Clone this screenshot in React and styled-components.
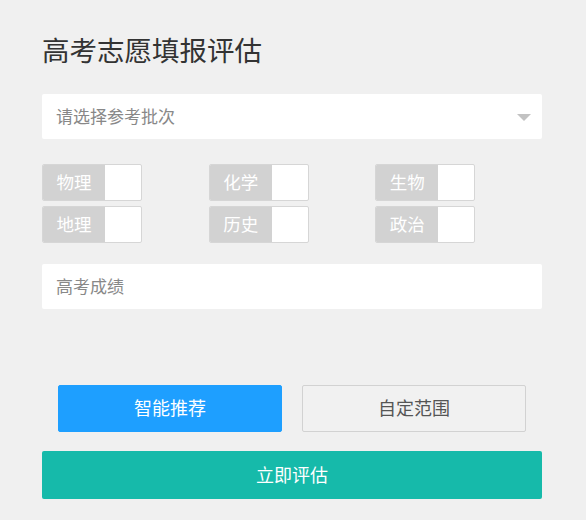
import React from "react";
import styled, { createGlobalStyle } from "styled-components";

const Global = createGlobalStyle`
  html, body { margin: 0; padding: 0; background: #f0f0f0; }
  body { font-family: "Noto Sans CJK SC", "Noto Sans", sans-serif; }
  * { box-sizing: border-box; }
`;

const Page = styled.div`
  width: 500px;
  margin-left: 42px;
  padding-top: 30px;
  display: flex;
  flex-direction: column;
`;

const Title = styled.h1`
  margin: 0;
  font-size: 27.5px;
  line-height: 38px;
  padding-bottom: 2px;
  font-weight: 400;
  color: #333;
`;

const Field = styled.div`
  height: 45px;
  margin-top: ${(p) => p.$mt}px;
  background: #fff;
  border-radius: 2px;
  display: flex;
  align-items: center;
  justify-content: space-between;
  padding: 0 11px 3px 14px;
  font-size: 17px;
  color: #888;
`;

const Arrow = styled.span`
  width: 0;
  height: 0;
  border-left: 7px solid transparent;
  border-right: 7px solid transparent;
  border-top: 7px solid #c2c2c2;
  margin-top: 4px;
`;

const Grid = styled.div`
  margin-top: 25px;
  display: grid;
  grid-template-columns: repeat(3, 1fr);
  row-gap: 5px;
`;

const Toggle = styled.div`
  width: 100px;
  height: 37px;
  display: flex;
  border: 1px solid #d6d6d6;
  border-radius: 2px;
  overflow: hidden;
  background: #fff;
`;

const ToggleLabel = styled.span`
  width: 62px;
  background: #d2d2d2;
  color: #fff;
  font-size: 17.5px;
  padding-bottom: 2px;
  display: flex;
  align-items: center;
  justify-content: center;
`;

const Buttons = styled.div`
  margin-top: 76px;
  display: flex;
  justify-content: space-between;
  padding: 0 16px;
`;

const Btn = styled.button`
  width: 224px;
  height: 47px;
  border-radius: 2px;
  font-family: inherit;
  font-size: 18px;
  padding: 0 0 3px;
  cursor: pointer;
  border: 1px solid ${(p) => (p.$primary ? "#1e9fff" : "#d2d2d2")};
  background: ${(p) => (p.$primary ? "#1e9fff" : "#f1f1f1")};
  color: ${(p) => (p.$primary ? "#fff" : "#555")};
`;

const Submit = styled.button`
  margin-top: 19px;
  height: 48px;
  width: 100%;
  border: none;
  border-radius: 2px;
  background: #16baaa;
  color: #fff;
  font-family: inherit;
  font-size: 18px;
  padding: 0 0 3px;
  cursor: pointer;
`;

const subjects = ["物理", "化学", "生物", "地理", "历史", "政治"];

export default function App() {
  return (
    <>
      <Global />
      <Page>
        <Title>高考志愿填报评估</Title>
        <Field $mt={24}>
          <span>请选择参考批次</span>
          <Arrow />
        </Field>
        <Grid>
          {subjects.map((s) => (
            <Toggle key={s}>
              <ToggleLabel>{s}</ToggleLabel>
            </Toggle>
          ))}
        </Grid>
        <Field $mt={21}>
          <span>高考成绩</span>
        </Field>
        <Buttons>
          <Btn $primary>智能推荐</Btn>
          <Btn>自定范围</Btn>
        </Buttons>
        <Submit>立即评估</Submit>
      </Page>
    </>
  );
}
